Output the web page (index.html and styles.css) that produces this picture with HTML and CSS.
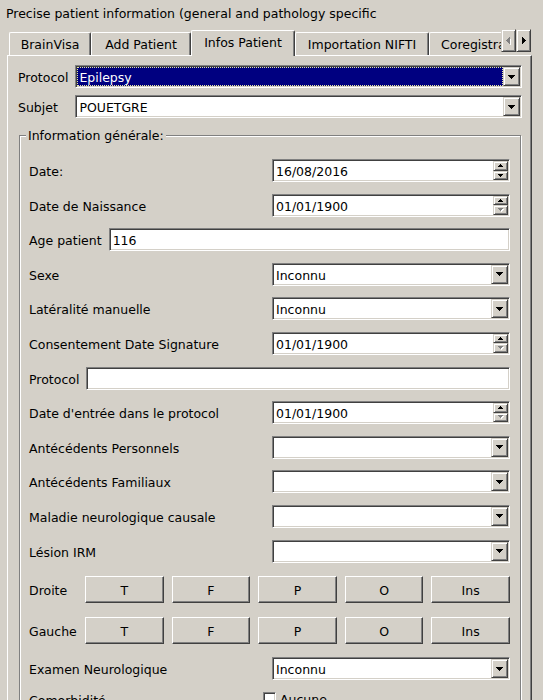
FILE: index.html
```html
<!DOCTYPE html>
<html lang="fr">
<head>
<meta charset="utf-8">
<title>Infos Patient</title>
<link rel="stylesheet" href="styles.css">
</head>
<body>
<div class="title">Precise patient information (general and pathology specific</div>
<div class="tabwidget">
  <div class="tabbar">
    <div class="tabstrip">
      <div class="tab tab-brainvisa">BrainVisa</div>
      <div class="tab tab-add">Add Patient</div>
      <div class="tab tab-infos active">Infos Patient</div>
      <div class="tab tab-nifti">Importation NIFTI</div>
      <div class="tab tab-coreg">Coregistration</div>
    </div>
    <div class="tabscroll">
      <div class="scrollbtn disabled"><svg width="5" height="8" viewBox="0 0 5 8" shape-rendering="crispEdges"><path class="emb" d="M5 1V8L1 5z"/><path d="M4 0V7L0 3.5z"/></svg></div>
      <div class="scrollbtn"><svg width="4" height="7" viewBox="0 0 4 7" shape-rendering="crispEdges"><path d="M0 0V7L4 3.5z"/></svg></div>
    </div>
  </div>
  <div class="pane">
    <div class="topgrid">
      <span class="lbl">Protocol</span>
      <div class="combo">
        <div class="combo-field selected"><span>Epilepsy</span></div>
        <div class="combo-btn"><svg width="7" height="4" viewBox="0 0 7 4" shape-rendering="crispEdges"><path d="M0 0H7L3.5 4z"/></svg></div>
      </div>
      <span class="lbl">Subjet</span>
      <div class="combo">
        <div class="combo-field"><span>POUETGRE</span></div>
        <div class="combo-btn"><svg width="7" height="4" viewBox="0 0 7 4" shape-rendering="crispEdges"><path d="M0 0H7L3.5 4z"/></svg></div>
      </div>
    </div>

    <div class="group">
      <div class="group-title">Information générale:</div>
      <div class="rows">
        <div class="row">
          <span class="lbl lbl-wide">Date:</span>
          <div class="spin">
            <div class="spin-field">16/08/2016</div>
            <div class="spin-btns">
              <div class="spin-btn"><svg width="5" height="3" viewBox="0 0 5 3" shape-rendering="crispEdges"><path d="M0 3H5L2.5 0z"/></svg></div>
              <div class="spin-btn"><svg width="5" height="3" viewBox="0 0 5 3" shape-rendering="crispEdges"><path d="M0 0H5L2.5 3z"/></svg></div>
            </div>
          </div>
        </div>
        <div class="row">
          <span class="lbl lbl-wide">Date de Naissance</span>
          <div class="spin">
            <div class="spin-field">01/01/1900</div>
            <div class="spin-btns">
              <div class="spin-btn"><svg width="5" height="3" viewBox="0 0 5 3" shape-rendering="crispEdges"><path d="M0 3H5L2.5 0z"/></svg></div>
              <div class="spin-btn disabled"><svg width="6" height="4" viewBox="0 0 6 4" shape-rendering="crispEdges"><path class="emb" d="M1 1H6L3.5 4z"/><path d="M0 0H5L2.5 3z"/></svg></div>
            </div>
          </div>
        </div>
        <div class="row inline">
          <span class="lbl">Age patient</span>
          <div class="edit">116</div>
        </div>
        <div class="row">
          <span class="lbl lbl-wide">Sexe</span>
          <div class="combo">
            <div class="combo-field"><span>Inconnu</span></div>
            <div class="combo-btn"><svg width="7" height="4" viewBox="0 0 7 4" shape-rendering="crispEdges"><path d="M0 0H7L3.5 4z"/></svg></div>
          </div>
        </div>
        <div class="row">
          <span class="lbl lbl-wide">Latéralité manuelle</span>
          <div class="combo">
            <div class="combo-field"><span>Inconnu</span></div>
            <div class="combo-btn"><svg width="7" height="4" viewBox="0 0 7 4" shape-rendering="crispEdges"><path d="M0 0H7L3.5 4z"/></svg></div>
          </div>
        </div>
        <div class="row">
          <span class="lbl lbl-wide">Consentement Date Signature</span>
          <div class="spin">
            <div class="spin-field">01/01/1900</div>
            <div class="spin-btns">
              <div class="spin-btn"><svg width="5" height="3" viewBox="0 0 5 3" shape-rendering="crispEdges"><path d="M0 3H5L2.5 0z"/></svg></div>
              <div class="spin-btn disabled"><svg width="6" height="4" viewBox="0 0 6 4" shape-rendering="crispEdges"><path class="emb" d="M1 1H6L3.5 4z"/><path d="M0 0H5L2.5 3z"/></svg></div>
            </div>
          </div>
        </div>
        <div class="row inline">
          <span class="lbl">Protocol</span>
          <div class="edit"></div>
        </div>
        <div class="row">
          <span class="lbl lbl-wide">Date d'entrée dans le protocol</span>
          <div class="spin">
            <div class="spin-field">01/01/1900</div>
            <div class="spin-btns">
              <div class="spin-btn"><svg width="5" height="3" viewBox="0 0 5 3" shape-rendering="crispEdges"><path d="M0 3H5L2.5 0z"/></svg></div>
              <div class="spin-btn disabled"><svg width="6" height="4" viewBox="0 0 6 4" shape-rendering="crispEdges"><path class="emb" d="M1 1H6L3.5 4z"/><path d="M0 0H5L2.5 3z"/></svg></div>
            </div>
          </div>
        </div>
        <div class="row">
          <span class="lbl lbl-wide">Antécédents Personnels</span>
          <div class="combo">
            <div class="combo-field"><span></span></div>
            <div class="combo-btn"><svg width="7" height="4" viewBox="0 0 7 4" shape-rendering="crispEdges"><path d="M0 0H7L3.5 4z"/></svg></div>
          </div>
        </div>
        <div class="row">
          <span class="lbl lbl-wide">Antécédents Familiaux</span>
          <div class="combo">
            <div class="combo-field"><span></span></div>
            <div class="combo-btn"><svg width="7" height="4" viewBox="0 0 7 4" shape-rendering="crispEdges"><path d="M0 0H7L3.5 4z"/></svg></div>
          </div>
        </div>
        <div class="row">
          <span class="lbl lbl-wide">Maladie neurologique causale</span>
          <div class="combo">
            <div class="combo-field"><span></span></div>
            <div class="combo-btn"><svg width="7" height="4" viewBox="0 0 7 4" shape-rendering="crispEdges"><path d="M0 0H7L3.5 4z"/></svg></div>
          </div>
        </div>
        <div class="row">
          <span class="lbl lbl-wide">Lésion IRM</span>
          <div class="combo">
            <div class="combo-field"><span></span></div>
            <div class="combo-btn"><svg width="7" height="4" viewBox="0 0 7 4" shape-rendering="crispEdges"><path d="M0 0H7L3.5 4z"/></svg></div>
          </div>
        </div>
        <div class="row btnrow">
          <span class="lbl btn-lbl">Droite</span>
          <div class="btns">
            <div class="btn">T</div>
            <div class="btn">F</div>
            <div class="btn">P</div>
            <div class="btn">O</div>
            <div class="btn">Ins</div>
          </div>
        </div>
        <div class="row btnrow">
          <span class="lbl btn-lbl">Gauche</span>
          <div class="btns">
            <div class="btn">T</div>
            <div class="btn">F</div>
            <div class="btn">P</div>
            <div class="btn">O</div>
            <div class="btn">Ins</div>
          </div>
        </div>
        <div class="row">
          <span class="lbl lbl-wide">Examen Neurologique</span>
          <div class="combo">
            <div class="combo-field"><span>Inconnu</span></div>
            <div class="combo-btn"><svg width="7" height="4" viewBox="0 0 7 4" shape-rendering="crispEdges"><path d="M0 0H7L3.5 4z"/></svg></div>
          </div>
        </div>
        <div class="row checkrow">
          <span class="lbl lbl-check">Comorbidité</span>
          <div class="check"><span class="checkbox"></span><span>Aucune</span></div>
        </div>
      </div>
    </div>
  </div>
</div>
</body>
</html>
```

FILE: styles.css
```css
* { box-sizing: border-box; }
html, body { margin: 0; padding: 0; }
body {
  background: #d4d0c8;
  font-family: "DejaVu Sans", sans-serif;
  font-size: 12.5px;
  color: #000;
  width: 543px;
  height: 700px;
  overflow: hidden;
}
.title {
  height: 26px;
  line-height: 26px;
  padding: 1px 0 0 6px;
  white-space: nowrap;
}
.tabwidget {
  margin-left: 7px;
  width: 525px;
}
.tabbar {
  display: flex;
  height: 30px;
  position: relative;
  z-index: 1;
}
.tabstrip {
  flex: 1;
  min-width: 0;
  display: flex;
  align-items: flex-end;
  overflow: hidden;
  padding-left: 2px;
}
.tab {
  flex: none;
  height: 23px;
  margin-bottom: 1px;
  display: flex;
  align-items: center;
  justify-content: center;
  white-space: nowrap;
  background: #d4d0c8;
  border-top: 1px solid #fff;
  border-left: 1px solid #fff;
  border-right: 1px solid #404040;
  box-shadow: inset -1px 0 #808080;
  border-radius: 2px 2px 0 0;
}
.tab.active {
  height: 26px;
  margin-bottom: 0;
  padding-bottom: 2px;
}
.tab-brainvisa { width: 82px; }
.tab-add { width: 100px; }
.tab-infos { width: 104px; }
.tab-nifti { width: 134px; }
.tab-coreg { padding: 0 11px; }
.tabscroll {
  flex: none;
  display: flex;
  margin-top: 3px;
  margin-right: 1px;
  height: 23px;
}
.scrollbtn {
  width: 15px;
  height: 23px;
  display: flex;
  align-items: center;
  justify-content: center;
  background: #d4d0c8;
  border: 1px solid;
  border-color: #d4d0c8 #404040 #404040 #d4d0c8;
  box-shadow: inset 1px 1px #fff, inset -1px -1px #808080;
}
.scrollbtn svg path { fill: #000; }
.scrollbtn.disabled svg path { fill: #808080; }
.scrollbtn.disabled svg path.emb { fill: #fff; }

.pane {
  margin-top: -1px;
  border-top: 1px solid #fff;
  border-left: 1px solid #fff;
  border-right: 1px solid #404040;
  box-shadow: inset -1px 0 #808080;
  padding: 9px 9px 30px 10px;
  min-height: 700px;
}
.topgrid {
  display: grid;
  grid-template-columns: auto 1fr;
  column-gap: 7px;
  row-gap: 7px;
  align-items: center;
}
.lbl { white-space: nowrap; padding-top: 2px; }

/* sunken frames */
.combo, .spin, .edit {
  height: 23px;
  background: #fff;
  border: 1px solid;
  border-color: #808080 #fff #fff #808080;
  box-shadow: inset 1px 1px #404040, inset -1px -1px #d4d0c8;
  padding: 1px;
  white-space: nowrap;
}
.combo, .spin { display: flex; }
.row > .combo, .row > .spin, .row > .edit { flex: 1; min-width: 0; }
.combo-field {
  flex: 1;
  display: flex;
  align-items: center;
  padding: 2px 0 0 2px;
  overflow: hidden;
}
.combo-field.selected {
  background: #000080;
  color: #fff;
  outline: 1px dotted #e8e8a0;
  outline-offset: -1px;
}
.combo-btn {
  flex: none;
  width: 17px;
  display: flex;
  align-items: center;
  justify-content: center;
  background: #d4d0c8;
  border: 1px solid;
  border-color: #d4d0c8 #404040 #404040 #d4d0c8;
  box-shadow: inset 1px 1px #fff, inset -1px -1px #808080;
}
.combo-btn svg path { fill: #000; }
.spin-field {
  flex: 1;
  display: flex;
  align-items: center;
  padding: 2px 0 0 2px;
}
.spin-btns {
  flex: none;
  width: 15px;
  display: flex;
  flex-direction: column;
}
.spin-btn {
  flex: 1;
  display: flex;
  align-items: center;
  justify-content: center;
  background: #d4d0c8;
  border: 1px solid;
  border-color: #d4d0c8 #404040 #404040 #d4d0c8;
  box-shadow: inset 1px 1px #fff, inset -1px -1px #808080;
}
.spin-btn svg path { fill: #000; }
.spin-btn.disabled svg path { fill: #808080; }
.spin-btn.disabled svg path.emb { fill: #fff; }
.edit {
  display: flex;
  align-items: center;
  padding: 3px 1px 1px 3px;
}

/* group box */
.group {
  position: relative;
  margin: 17px 1px 0 1px;
  border: 1px solid #808080;
  box-shadow: inset 1px 1px #fff, 1px 1px #fff;
  padding: 23px 10px 30px 9px;
}
.group-title {
  position: absolute;
  top: -8px;
  left: 6px;
  line-height: 15px;
  padding: 0 2px;
  background: #d4d0c8;
  white-space: nowrap;
}
.rows {
  display: flex;
  flex-direction: column;
  gap: 11.6px;
}
.row {
  display: flex;
  align-items: center;
  height: 23px;
}
.lbl-wide { flex: none; width: 243px; }
.row.inline { gap: 7px; }
.row.btnrow { height: 30px; }
.btn-lbl { flex: none; width: 48px; margin-right: 8px; }
.btns {
  flex: 1;
  display: flex;
  gap: 8px;
}
.btn {
  flex: 1;
  height: 27px;
  padding-top: 2px;
  display: flex;
  align-items: center;
  justify-content: center;
  background: #d4d0c8;
  border: 1px solid;
  border-color: #fff #404040 #404040 #fff;
  box-shadow: inset -1px -1px #808080;
}
.row.checkrow { align-items: flex-start; }
.lbl-check { flex: none; width: 234px; padding-top: 1px; }
.check {
  display: flex;
  align-items: flex-start;
  gap: 4px;
}
.checkbox {
  width: 13px;
  height: 13px;
  background: #fff;
  border: 1px solid;
  border-color: #808080 #fff #fff #808080;
  box-shadow: inset 1px 1px #404040, inset -1px -1px #d4d0c8;
}
```
